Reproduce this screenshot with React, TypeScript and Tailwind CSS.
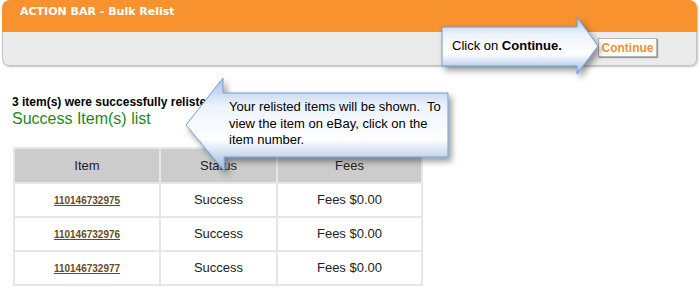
import * as React from 'react';

const rows = [
  { id: '110146732975', status: 'Success', fees: 'Fees $0.00' },
  { id: '110146732976', status: 'Success', fees: 'Fees $0.00' },
  { id: '110146732977', status: 'Success', fees: 'Fees $0.00' },
];

function CalloutShape({ points, id }: { points: string; id: string }) {
  return (
    <svg className="absolute inset-0" width="700" height="297" viewBox="0 0 700 297">
      <defs>
        <linearGradient id={`${id}-v`} x1="0" y1="0" x2="0" y2="1">
          <stop offset="0" stopColor="#a3bfe9" />
          <stop offset="0.3" stopColor="#edf3fc" />
          <stop offset="0.65" stopColor="#ffffff" />
          <stop offset="1" stopColor="#92b3e4" />
        </linearGradient>
        <filter id={`${id}-s`} x="-10%" y="-20%" width="130%" height="150%">
          <feDropShadow dx="3" dy="4" stdDeviation="3" floodColor="#000" floodOpacity="0.4" />
        </filter>
      </defs>
      <polygon
        points={points}
        fill={`url(#${id}-v)`}
        stroke="#6f9bd8"
        strokeWidth="1"
        strokeLinejoin="round"
        filter={`url(#${id}-s)`}
      />
    </svg>
  );
}

export default function App() {
  return (
    <div className="relative w-[700px] h-[297px] overflow-hidden bg-white font-['Liberation_Sans',Arial,sans-serif] text-black">
      {/* action bar panel */}
      <div className="ml-[2px] w-[695px] shadow-[1px_1px_2px_rgba(0,0,0,0.25)] rounded-[7px]">
        <div className="h-[32px] rounded-t-[8px] bg-[#f7922f] pl-[18px] pt-[4px] font-['DejaVu_Sans',Verdana,sans-serif] text-[11px] font-bold text-white">
          ACTION BAR - Bulk Relist
        </div>
        <div className="flex h-[34px] justify-end rounded-b-[7px] border border-t-0 border-[#c4c4c4] bg-[#ebebeb] pr-[39px] pt-[6px]">
          <button className="h-[19px] w-[59px] border border-[#b5b5b5] bg-white text-[12px] font-bold leading-none text-[#f7922f] shadow-[1px_1px_1px_rgba(0,0,0,0.35)]">
            Continue
          </button>
        </div>
      </div>

      {/* results */}
      <div className="pl-[12px] pt-[29px]">
        <div className="text-[12px] font-bold leading-[14px]">3 item(s) were successfully relisted.</div>
        <div className="text-[16px] leading-[19px] text-[#1a8a1a]">Success Item(s) list</div>
        <table className="ml-[1px] mt-[19px] w-[410px] border-collapse border-2 border-[#e6e6e6] text-center text-[13px] text-[#222]">
          <thead>
            <tr className="h-[35px] bg-[#cccccc]">
              <th className="w-[146px] border-2 border-[#e6e6e6] font-normal">Item</th>
              <th className="w-[117px] border-2 border-[#e6e6e6] font-normal">Status</th>
              <th className="border-2 border-[#e6e6e6] font-normal">Fees</th>
            </tr>
          </thead>
          <tbody>
            {rows.map((r) => (
              <tr key={r.id} className="h-[34px] bg-white">
                <td className="border-2 border-[#e6e6e6]">
                  <a href="#" className="text-[10px] font-bold text-[#6b4a1c] underline">
                    {r.id}
                  </a>
                </td>
                <td className="border-2 border-[#e6e6e6]">{r.status}</td>
                <td className="border-2 border-[#e6e6e6]">{r.fees}</td>
              </tr>
            ))}
          </tbody>
        </table>
      </div>

      {/* callouts */}
      <CalloutShape id="ra" points="442,27 577,27 577,17 598,46 577,74 577,66 442,66" />
      <div className="absolute left-[452px] top-[38px] text-[13px] leading-[15px]">
        Click on <b>Continue.</b>
      </div>

      <CalloutShape id="la" points="186,125 223,78 223,93 448,93 448,157 224,157 225,172" />
      <div className="absolute left-[229px] top-[99px] whitespace-pre text-[13px] leading-[16.5px]">
        {'Your relisted items will be shown.  To\nview the item on eBay, click on the\nitem number.'}
      </div>
    </div>
  );
}
